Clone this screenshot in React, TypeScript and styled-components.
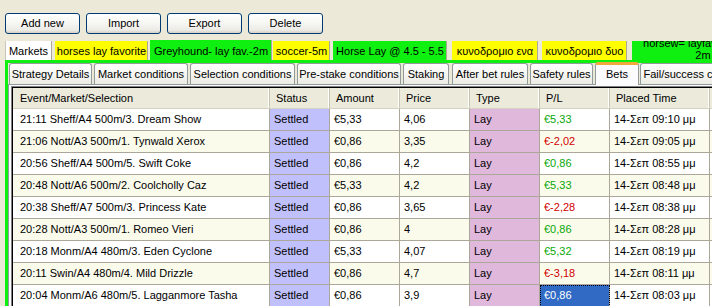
import React from "react";
import styled, { createGlobalStyle } from "styled-components";

const GlobalStyle = createGlobalStyle`
  html, body {
    margin: 0;
    padding: 0;
    background: #ece9d8;
    overflow: hidden;
  }
  body {
    font-family: "Liberation Sans", Arial, sans-serif;
    font-size: 11px;
    color: #000;
  }
`;

const GREEN = "#10f010";
const YELLOW = "#ffff00";

const Window = styled.div`
  width: 712px;
  height: 306px;
  overflow: hidden;
  display: flex;
  flex-direction: column;
  background: #ece9d8;
`;

const Toolbar = styled.div`
  height: 41px;
  box-sizing: border-box;
  padding: 13px 0 0 5px;
  display: flex;
  align-items: flex-start;
  gap: 6px;
`;

const Button = styled.button`
  width: 75px;
  height: 21px;
  box-sizing: border-box;
  border: 1px solid #003c74;
  border-radius: 3px;
  background: linear-gradient(#ffffff 0%, #f7f7f4 45%, #ecebe6 85%, #d6d0c5 100%);
  font: inherit;
  color: #000;
  padding: 0;
  line-height: 19px;
`;

const MarketStrip = styled.div`
  height: 19px;
  display: flex;
  align-items: flex-end;
  padding-left: 5px;
`;

const MarketTab = styled.div<{ $bg: string; $w: number; $gap: number; $active?: boolean }>`
  flex: none;
  width: ${(p) => p.$w}px;
  height: ${(p) => (p.$active ? 20 : 19)}px;
  margin-right: ${(p) => p.$gap}px;
  box-sizing: border-box;
  background: ${(p) => p.$bg};
  border-left: 1px solid ${(p) => (p.$bg === "#ffffff" ? "#c8c6b8" : "transparent")};
  border-right: 1px solid #aca899;
  padding-top: ${(p) => (p.$active ? 1 : 0)}px;
  display: flex;
  align-items: center;
  justify-content: center;
  white-space: nowrap;
  overflow: hidden;
`;

const WrapLabel = styled.div`
  width: 142px;
  flex: none;
  text-align: center;
  line-height: 12px;
  margin-top: -4px;
  white-space: normal;
  align-self: flex-start;
`;

const Panel = styled.div`
  flex: 1;
  margin-left: 5px;
  border-top: 3px solid ${GREEN};
  border-left: 3px solid ${GREEN};
  display: flex;
  flex-direction: column;
  min-height: 0;
`;

const SubStrip = styled.div`
  height: 21px;
  display: flex;
  align-items: flex-end;
  padding-left: 1px;
`;

const SubTab = styled.div<{ $w: number; $gap: number; $active?: boolean }>`
  flex: none;
  width: ${(p) => p.$w}px;
  height: ${(p) => (p.$active ? 23 : 21)}px;
  margin-right: ${(p) => p.$gap}px;
  margin-bottom: ${(p) => (p.$active ? -1 : 0)}px;
  box-sizing: border-box;
  border: 1px solid #919b9c;
  border-bottom: none;
  border-radius: 3px 3px 0 0;
  background: ${(p) =>
    p.$active ? "#fcfcfe" : "linear-gradient(#ffffff 0%, #f6f6f2 50%, #ecebe3 100%)"};
  border-top: ${(p) => (p.$active ? "3px solid #f2a93b" : "1px solid #919b9c")};
  display: flex;
  align-items: ${(p) => (p.$active ? "flex-start" : "center")};
  padding-top: ${(p) => (p.$active ? 3 : 0)}px;
  justify-content: center;
  white-space: nowrap;
  overflow: hidden;
  position: relative;
  z-index: ${(p) => (p.$active ? 2 : 1)};
`;

const SubBody = styled.div`
  flex: 1;
  border-top: 1px solid #919b9c;
  border-left: 1px solid #919b9c;
  padding: 1px 0 0 2px;
  background: #fcfcfe;
  display: flex;
  min-height: 0;
`;

const GridFrame = styled.div`
  flex: 1;
  border-top: 1px solid #808080;
  border-left: 1px solid #808080;
  display: flex;
  min-height: 0;
`;

const Grid = styled.div`
  flex: 1;
  border-top: 1px solid #000;
  border-left: 1px solid #000;
  background: #fff;
  overflow: hidden;
`;

const COLS = "257px 60px 70px 70px 70px 70px 100px 1fr";

const HeaderRow = styled.div`
  display: grid;
  grid-template-columns: ${COLS};
  height: 21px;
  box-sizing: border-box;
  background: #ebeadb;
  border-bottom: 1px solid #d6d2c2;
`;

const HeaderCell = styled.div<{ $first?: boolean }>`
  padding-left: ${(p) => (p.$first ? 7 : 6)}px;
  line-height: 20px;
  white-space: nowrap;
  overflow: hidden;
  border-right: 1px solid #c7c5b2;
  box-shadow: inset -1px 0 0 #fff;
`;

const Row = styled.div<{ $alt: boolean }>`
  display: grid;
  grid-template-columns: ${COLS};
  height: 22px;
  background: ${(p) => (p.$alt ? "#fbfbec" : "#ffffff")};
`;

type Tone = "plain" | "status" | "type" | "win" | "loss" | "selected";

const toneBg: Record<Tone, string> = {
  plain: "transparent",
  status: "#c0c0fc",
  type: "#e0b8dc",
  win: "transparent",
  loss: "transparent",
  selected: "#316ac5",
};

const toneFg: Record<Tone, string> = {
  plain: "#000",
  status: "#000",
  type: "#000",
  win: "#08a808",
  loss: "#d00000",
  selected: "#fff",
};

const Cell = styled.div<{ $tone: Tone; $first?: boolean }>`
  box-sizing: border-box;
  padding-left: ${(p) => (p.$first ? 7 : 4)}px;
  line-height: 21px;
  white-space: nowrap;
  overflow: hidden;
  border-right: 1px solid #aca899;
  border-bottom: 1px solid #aca899;
  background: ${(p) => toneBg[p.$tone]};
  color: ${(p) => toneFg[p.$tone]};
  outline: ${(p) => (p.$tone === "selected" ? "1px dotted #000" : "none")};
  outline-offset: -1px;
`;

const buttons = ["Add new", "Import", "Export", "Delete"];

const markets = [
  { label: "Markets", bg: "#ffffff", w: 47, gap: 3 },
  { label: "horses lay favorite", bg: YELLOW, w: 93, gap: 2 },
  { label: "Greyhound- lay fav.-2m", bg: GREEN, w: 122, gap: 1, active: true },
  { label: "soccer-5m", bg: YELLOW, w: 57, gap: 3 },
  { label: "Horse Lay  @ 4.5 - 5.5", bg: GREEN, w: 114, gap: 5 },
  { label: "κυνοδρομιο ενα", bg: YELLOW, w: 86, gap: 4 },
  { label: "κυνοδρομιο δυο", bg: YELLOW, w: 85, gap: 5 },
];

const subTabs = [
  { label: "Strategy Details", w: 83, gap: 2 },
  { label: "Market conditions", w: 94, gap: 2 },
  { label: "Selection conditions", w: 105, gap: 2 },
  { label: "Pre-stake conditions", w: 104, gap: 2 },
  { label: "Staking", w: 46, gap: 3 },
  { label: "After bet rules", w: 76, gap: 2 },
  { label: "Safety rules", w: 63, gap: 2 },
  { label: "Bets", w: 44, gap: 1, active: true },
  { label: "Fail/success conditions", w: 120, gap: 0 },
];

const headers = ["Event/Market/Selection", "Status", "Amount", "Price", "Type", "P/L", "Placed Time", ""];

const bets = [
  ["21:11 Sheff/A4 500m/3. Dream Show", "€5,33", "4,06", "€5,33", "09:10"],
  ["21:06 Nott/A3 500m/1. Tynwald Xerox", "€0,86", "3,35", "€-2,02", "09:05"],
  ["20:56 Sheff/A4 500m/5. Swift Coke", "€0,86", "4,2", "€0,86", "08:55"],
  ["20:48 Nott/A6 500m/2. Coolcholly Caz", "€5,33", "4,2", "€5,33", "08:48"],
  ["20:38 Sheff/A7 500m/3. Princess Kate", "€0,86", "3,65", "€-2,28", "08:38"],
  ["20:28 Nott/A3 500m/1. Romeo Vieri", "€0,86", "4", "€0,86", "08:28"],
  ["20:18 Monm/A4 480m/3. Eden Cyclone", "€5,33", "4,07", "€5,32", "08:19"],
  ["20:11 Swin/A4 480m/4. Mild Drizzle", "€0,86", "4,7", "€-3,18", "08:11"],
  ["20:04 Monm/A6 480m/5. Lagganmore Tasha", "€0,86", "3,9", "€0,86", "08:03"],
];

export default function App() {
  return (
    <>
      <GlobalStyle />
      <Window>
        <Toolbar>
          {buttons.map((b) => (
            <Button key={b}>{b}</Button>
          ))}
        </Toolbar>

        <MarketStrip>
          {markets.map((m) => (
            <MarketTab key={m.label} $bg={m.bg} $w={m.w} $gap={m.gap} $active={m.active}>
              {m.label}
            </MarketTab>
          ))}
          <MarketTab $bg={GREEN} $w={142} $gap={0}>
            <WrapLabel>
              horsew= layfav. 4.5-5.5 -
              <br />
              2m
            </WrapLabel>
          </MarketTab>
        </MarketStrip>

        <Panel>
          <SubStrip>
            {subTabs.map((t) => (
              <SubTab key={t.label} $w={t.w} $gap={t.gap} $active={t.active}>
                {t.label}
              </SubTab>
            ))}
          </SubStrip>
          <SubBody>
            <GridFrame>
              <Grid>
                <HeaderRow>
                  {headers.map((h, i) => (
                    <HeaderCell key={i} $first={i === 0}>
                      {h}
                    </HeaderCell>
                  ))}
                </HeaderRow>
                {bets.map(([event, amount, price, pl, time], i) => {
                  const last = i === bets.length - 1;
                  const plTone: Tone = last ? "selected" : pl.includes("-") ? "loss" : "win";
                  return (
                    <Row key={i} $alt={i % 2 === 1}>
                      <Cell $tone="plain" $first>
                        {event}
                      </Cell>
                      <Cell $tone="status">Settled</Cell>
                      <Cell $tone="plain">{amount}</Cell>
                      <Cell $tone="plain">{price}</Cell>
                      <Cell $tone="type">Lay</Cell>
                      <Cell $tone={plTone}>{pl}</Cell>
                      <Cell $tone="plain">14-Σεπ {time} μμ</Cell>
                      <Cell $tone="plain" />
                    </Row>
                  );
                })}
              </Grid>
            </GridFrame>
          </SubBody>
        </Panel>
      </Window>
    </>
  );
}
